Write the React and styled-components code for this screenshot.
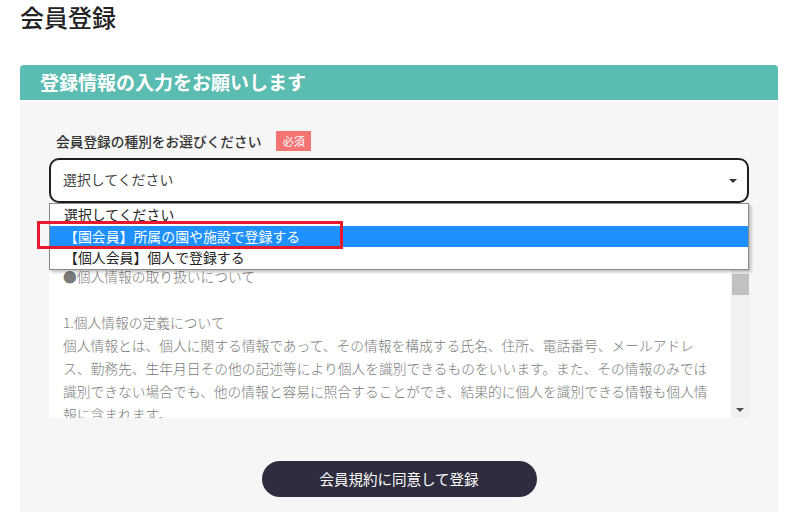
import React from "react";
import styled, { createGlobalStyle } from "styled-components";

const Global = createGlobalStyle`
  html, body { margin: 0; padding: 0; background: #fff; }
  body { font-family: "Noto Sans CJK JP", "Noto Sans", sans-serif; color: #222; }
  * { box-sizing: border-box; }
`;

const Page = styled.div`
  width: 800px;
  height: 512px;
  overflow: hidden;
  padding: 0 22px 0 20px;
`;

const Title = styled.h1`
  margin: 0;
  font-size: 24px;
  line-height: 33px;
  font-weight: 500;
  color: #222;
`;

const Card = styled.section`
  margin-top: 32px;
  display: flex;
  flex-direction: column;
`;

const CardHeader = styled.h2`
  margin: 0;
  height: 35px;
  background: #5bbcb1;
  border-radius: 4px 4px 0 0;
  color: #fff;
  font-size: 19px;
  font-weight: 700;
  line-height: 34px;
  padding-left: 20px;
`;

const CardBody = styled.div`
  margin-top: 1px;
  background: #f6f6f6;
  border-radius: 5px 5px 0 0;
  padding: 30px 29px 40px;
  display: flex;
  flex-direction: column;
`;

const LabelRow = styled.div`
  display: flex;
  align-items: center;
  height: 20px;
  padding-left: 7px;
  gap: 15px;
`;

const Label = styled.span`
  font-size: 13.7px;
  font-weight: 500;
  color: #333;
`;

const Badge = styled.span`
  background: #f47474;
  color: #fff;
  font-size: 11px;
  width: 35px;
  height: 20px;
  line-height: 20px;
  text-align: center;
`;

const SelectWrap = styled.div`
  position: relative;
  margin-top: 7px;
`;

const SelectBox = styled.div`
  height: 45px;
  border: 2px solid #1e1e1e;
  border-radius: 10px;
  background: #fff;
  display: flex;
  align-items: center;
  justify-content: space-between;
  padding: 0 10px 3px 12px;
  font-size: 13.9px;
  color: #444;
`;

const Caret = styled.span`
  width: 0;
  height: 0;
  margin-top: 3px;
  border-left: 4px solid transparent;
  border-right: 4px solid transparent;
  border-top: 4px solid #333;
`;

const Menu = styled.ul`
  position: absolute;
  left: 0;
  right: 0;
  top: 45px;
  margin: 0;
  padding: 0;
  list-style: none;
  background: #fff;
  border: 1px solid #8a8a8a;
  box-shadow: 2px 2px 3px rgba(0, 0, 0, 0.25);
  z-index: 2;
`;

const Option = styled.li`
  height: 21.5px;
  line-height: 20.5px;
  padding-left: 14px;
  font-size: 13.9px;
  color: ${(p) => (p.$active ? "#fff" : "#222")};
  background: ${(p) => (p.$active ? "#1e90ff" : "transparent")};
`;

const Highlight = styled.div`
  position: absolute;
  left: -12px;
  top: 63px;
  width: 306px;
  height: 28px;
  border: 3px solid #e8192c;
  z-index: 3;
`;

const TextBox = styled.div`
  margin-top: 54px;
  height: 161px;
  background: #fff;
  display: flex;
  overflow: hidden;
`;

const TextContent = styled.div`
  flex: 1;
  padding: 8px 0 0 14px;
  font-size: 13.75px;
  line-height: 23px;
  color: #7a7a7a;
  font-weight: 300;
  white-space: nowrap;
  overflow: hidden;
`;

const Line = styled.div`
  height: 23px;
`;

const ScrollTrack = styled.div`
  width: 18px;
  background: #f1f1f1;
  display: flex;
  flex-direction: column;
  align-items: center;
`;

const ArrowBtn = styled.div`
  height: 17px;
  width: 100%;
  display: flex;
  align-items: center;
  justify-content: center;
  &::after {
    content: "";
    border-left: 4px solid transparent;
    border-right: 4px solid transparent;
    ${(p) =>
      p.$up ? "border-bottom: 4px solid #505050;" : "border-top: 4px solid #505050;"}
  }
`;

const Thumb = styled.div`
  width: 17px;
  height: 21px;
  background: #c1c1c1;
`;

const Spacer = styled.div`
  flex: 1;
`;

const SubmitRow = styled.div`
  display: flex;
  justify-content: center;
  margin-top: 43px;
`;

const Submit = styled.button`
  width: 275px;
  height: 36px;
  border: none;
  border-radius: 18px;
  background: #2e2c3e;
  color: #fff;
  font-family: "Noto Sans CJK JP", sans-serif;
  font-size: 14.5px;
  padding: 0 0 2px;
  cursor: pointer;
`;

const lines = [
  "●個人情報の取り扱いについて",
  "",
  "1.個人情報の定義について",
  "個人情報とは、個人に関する情報であって、その情報を構成する氏名、住所、電話番号、メールアドレ",
  "ス、勤務先、生年月日その他の記述等により個人を識別できるものをいいます。また、その情報のみでは",
  "識別できない場合でも、他の情報と容易に照合することができ、結果的に個人を識別できる情報も個人情",
  "報に含まれます。",
  "",
];

export default function App() {
  return (
    <Page>
      <Global />
      <Title>会員登録</Title>
      <Card>
        <CardHeader>登録情報の入力をお願いします</CardHeader>
        <CardBody>
          <LabelRow>
            <Label>会員登録の種別をお選びください</Label>
            <Badge>必須</Badge>
          </LabelRow>
          <SelectWrap>
            <SelectBox>
              <span>選択してください</span>
              <Caret />
            </SelectBox>
            <Menu>
              <Option>選択してください</Option>
              <Option $active>【園会員】所属の園や施設で登録する</Option>
              <Option>【個人会員】個人で登録する</Option>
            </Menu>
            <Highlight />
          </SelectWrap>
          <TextBox>
            <TextContent>
              {lines.map((l, i) => (
                <Line key={i}>{l}</Line>
              ))}
            </TextContent>
            <ScrollTrack>
              <ArrowBtn $up />
              <Thumb />
              <Spacer />
              <ArrowBtn />
            </ScrollTrack>
          </TextBox>
          <SubmitRow>
            <Submit>会員規約に同意して登録</Submit>
          </SubmitRow>
        </CardBody>
      </Card>
    </Page>
  );
}
